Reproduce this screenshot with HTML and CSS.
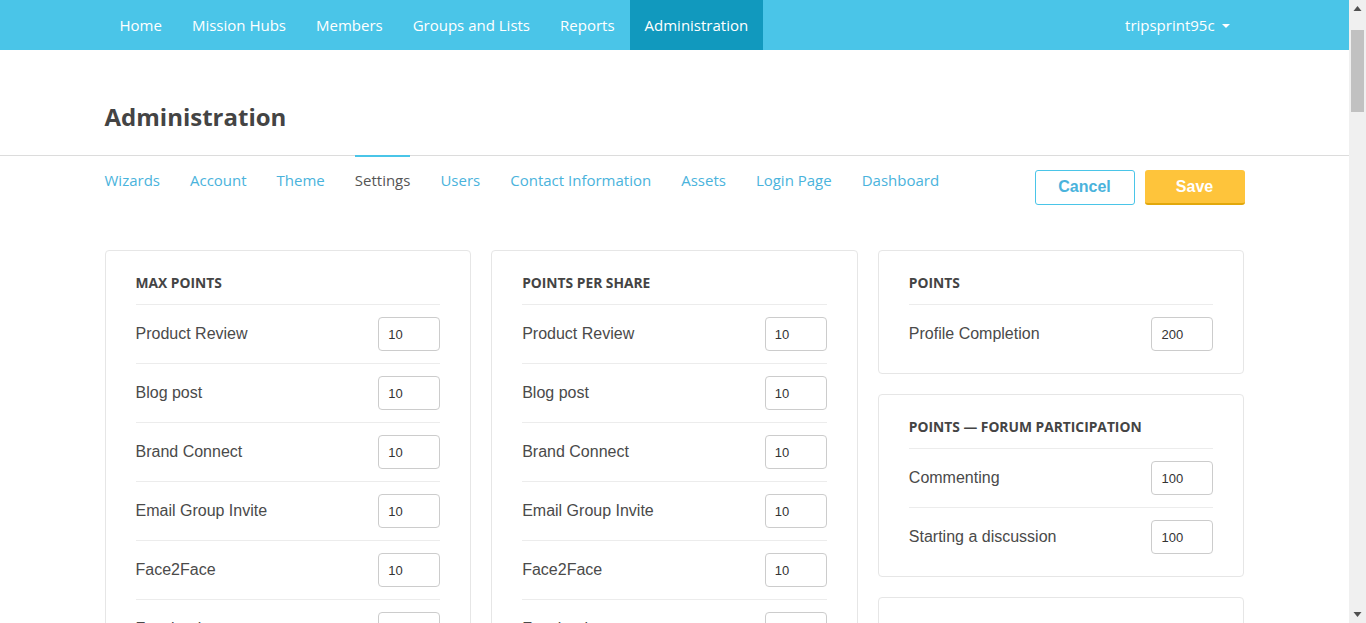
FILE: index.html
```html
<!DOCTYPE html>
<html lang="en">
<head>
<meta charset="utf-8">
<title>Administration - Settings</title>
<link rel="stylesheet" href="styles.css">
</head>
<body>
<div class="page">
  <nav class="navbar">
    <div class="container nav-inner">
      <ul class="nav-links">
        <li><a href="#">Home</a></li>
        <li><a href="#">Mission Hubs</a></li>
        <li><a href="#">Members</a></li>
        <li><a href="#">Groups and Lists</a></li>
        <li><a href="#">Reports</a></li>
        <li class="active"><a href="#">Administration</a></li>
      </ul>
      <div class="user-menu"><a href="#">tripsprint95c <span class="caret"></span></a></div>
    </div>
  </nav>

  <header class="page-header">
    <div class="container">
      <h1>Administration</h1>
    </div>
  </header>

  <div class="container toolbar">
    <ul class="tabs">
      <li><a href="#">Wizards</a></li>
      <li><a href="#">Account</a></li>
      <li><a href="#">Theme</a></li>
      <li class="active"><a href="#">Settings</a></li>
      <li><a href="#">Users</a></li>
      <li><a href="#">Contact Information</a></li>
      <li><a href="#">Assets</a></li>
      <li><a href="#">Login Page</a></li>
      <li><a href="#">Dashboard</a></li>
    </ul>
    <div class="actions">
      <button class="btn btn-cancel">Cancel</button>
      <button class="btn btn-save">Save</button>
    </div>
  </div>

  <main class="container grid">
    <div class="col">
      <section class="card">
        <h2>MAX POINTS</h2>
        <div class="row"><span>Product Review</span><input value="10"></div>
        <div class="row"><span>Blog post</span><input value="10"></div>
        <div class="row"><span>Brand Connect</span><input value="10"></div>
        <div class="row"><span>Email Group Invite</span><input value="10"></div>
        <div class="row"><span>Face2Face</span><input value="10"></div>
        <div class="row"><span>Facebook</span><input value="10"></div>
        <div class="row"><span>Forum</span><input value="10"></div>
        <div class="row"><span>Instagram</span><input value="10"></div>
        <div class="row"><span>LinkedIn</span><input value="10"></div>
        <div class="row"><span>Pinterest</span><input value="10"></div>
        <div class="row"><span>Twitter</span><input value="10"></div>
        <div class="row"><span>YouTube</span><input value="10"></div>
      </section>
    </div>
    <div class="col">
      <section class="card">
        <h2>POINTS PER SHARE</h2>
        <div class="row"><span>Product Review</span><input value="10"></div>
        <div class="row"><span>Blog post</span><input value="10"></div>
        <div class="row"><span>Brand Connect</span><input value="10"></div>
        <div class="row"><span>Email Group Invite</span><input value="10"></div>
        <div class="row"><span>Face2Face</span><input value="10"></div>
        <div class="row"><span>Facebook</span><input value="10"></div>
        <div class="row"><span>Forum</span><input value="10"></div>
        <div class="row"><span>Instagram</span><input value="10"></div>
        <div class="row"><span>LinkedIn</span><input value="10"></div>
        <div class="row"><span>Pinterest</span><input value="10"></div>
        <div class="row"><span>Twitter</span><input value="10"></div>
        <div class="row"><span>YouTube</span><input value="10"></div>
      </section>
    </div>
    <div class="col">
      <section class="card">
        <h2>POINTS</h2>
        <div class="row"><span>Profile Completion</span><input value="200"></div>
      </section>
      <section class="card">
        <h2>POINTS — FORUM PARTICIPATION</h2>
        <div class="row"><span>Commenting</span><input value="100"></div>
        <div class="row"><span>Starting a discussion</span><input value="100"></div>
      </section>
      <section class="card">
        <h2>POINTS — REFERRALS</h2>
        <div class="row"><span>Invite accepted</span><input value="50"></div>
      </section>
    </div>
  </main>
</div>

<aside class="scrollbar" aria-hidden="true">
  <svg class="arrow arrow-up" width="17" height="17" viewBox="0 0 17 17"><path d="M4.5 11 L8.5 6 L12.5 11 Z" fill="#505050"/></svg>
  <div class="thumb"></div>
  <svg class="arrow arrow-down" width="17" height="17" viewBox="0 0 17 17"><path d="M4.5 6 L8.5 11 L12.5 6 Z" fill="#505050"/></svg>
</aside>
</body>
</html>
```

FILE: styles.css
```css
* { box-sizing: border-box; }

html, body {
  margin: 0;
  padding: 0;
}

body {
  font-family: "Open Sans", "Liberation Sans", Arial, sans-serif;
  color: #444;
  background: #fff;
}

.page {
  min-height: 4470px;
  margin-right: 17px;
}

a { text-decoration: none; }

ul { list-style: none; margin: 0; padding: 0; }

.container {
  width: 1140px;
  margin: 0 auto;
}

/* Navbar */
.navbar {
  background: #4ac5e8;
  height: 50px;
}

.nav-inner {
  display: flex;
  justify-content: space-between;
  height: 50px;
}

.nav-links {
  display: flex;
  height: 50px;
}

.nav-links li a,
.user-menu a {
  display: block;
  height: 50px;
  line-height: 50px;
  padding: 0 15px;
  color: #fff;
  font-size: 15px;
}

.nav-links li.active a {
  background: #1199be;
}

.caret {
  display: inline-block;
  width: 0;
  height: 0;
  margin-left: 3px;
  vertical-align: middle;
  border-top: 4px solid #fff;
  border-left: 4px solid transparent;
  border-right: 4px solid transparent;
  position: relative;
  top: -1px;
}

/* Page header */
.page-header {
  border-bottom: 1px solid #dcdcdc;
}

.page-header h1 {
  margin: 0;
  padding: 50px 0 21px;
  font-size: 24px;
  line-height: 34px;
  font-weight: 700;
  color: #444;
}

/* Tabs + actions */
.toolbar {
  display: flex;
  justify-content: space-between;
  align-items: flex-start;
  margin-top: -1px;
}

.tabs {
  display: flex;
}

.tabs li {
  margin-right: 30px;
  border-top: 2px solid transparent;
}

.tabs li a {
  display: block;
  padding-top: 13px;
  font-size: 15px;
  line-height: 20px;
  color: #4ab3dc;
}

.tabs li.active {
  border-top-color: #4ac5e8;
}

.tabs li.active a {
  color: #555;
}

.actions {
  display: flex;
  gap: 10px;
  margin-top: 15px;
}

.btn {
  width: 100px;
  height: 35px;
  border-radius: 3px;
  font-family: "Liberation Sans", Arial, sans-serif;
  font-weight: 700;
  font-size: 16px;
  cursor: pointer;
}

.btn-cancel {
  background: #fff;
  border: 1px solid #4ac5e8;
  color: #4ab3dc;
  padding-bottom: 2px;
}

.btn-save {
  background: #fec43b;
  border: none;
  border-bottom: 2px solid #e2a80c;
  color: #fff;
}

/* Cards grid */
.grid {
  display: grid;
  grid-template-columns: repeat(3, 1fr);
  gap: 20px;
  margin-top: 45px;
  align-items: start;
}

.col {
  display: flex;
  flex-direction: column;
  gap: 20px;
}

.card {
  border: 1px solid #e6e6e6;
  border-radius: 4px;
  padding: 22px 30px 10px;
  background: #fff;
}

.card h2 {
  margin: 0;
  font-size: 13.8px;
  font-weight: 700;
  line-height: 20px;
  color: #444;
  padding-bottom: 11px;
}

.row {
  display: flex;
  align-items: center;
  justify-content: space-between;
  height: 59px;
  border-top: 1px solid #ececec;
  font-family: "Liberation Sans", Arial, sans-serif;
  font-size: 16px;
  color: #4a4a4a;
}

.row input {
  width: 62px;
  height: 34px;
  border: 1px solid #ccc;
  border-radius: 4px;
  padding: 0 9px;
  font-family: "Liberation Sans", Arial, sans-serif;
  font-size: 13px;
  color: #333;
}

/* Fake window scrollbar (overlay on the right edge) */
.scrollbar {
  position: fixed;
  top: 0;
  right: 0;
  width: 17px;
  height: 100vh;
  background: #f0f0f0;
}

.scrollbar .arrow {
  position: absolute;
  left: 0;
  display: block;
}

.scrollbar .arrow-up { top: 0; }
.scrollbar .arrow-down { bottom: 0; }

.scrollbar .thumb {
  position: absolute;
  top: 30px;
  left: 2px;
  width: 13px;
  height: 82px;
  background: #c1c1c1;
}
```
